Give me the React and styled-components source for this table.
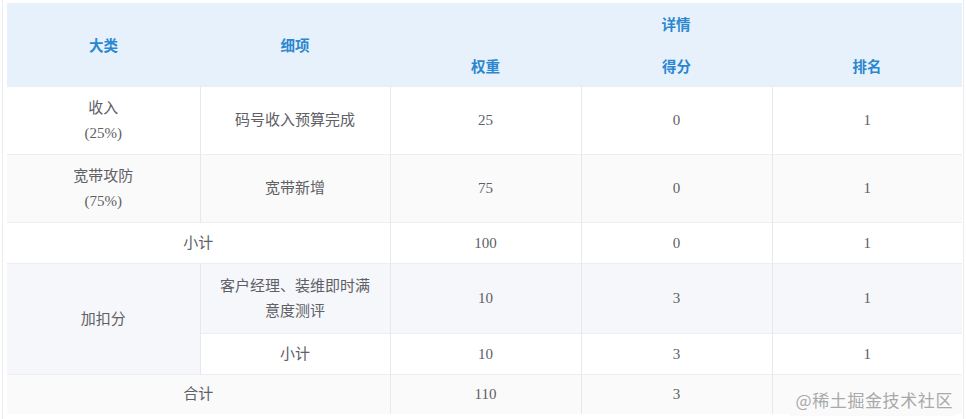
import React from 'react';
import styled, { createGlobalStyle } from 'styled-components';

const GlobalStyle = createGlobalStyle`
  body {
    margin: 0;
    background: #ffffff;
    font-family: "Liberation Serif", "Noto Sans CJK SC", serif;
  }
`;

const Frame = styled.div`
  position: relative;
  margin: 0 2px;
  padding: 3px 3px 0 4px;
  border-left: 1px solid #ececec;
  border-right: 1px solid #ececec;
  height: 416px;
`;

const Table = styled.table`
  width: 955px;
  table-layout: fixed;
  border-collapse: collapse;
  font-size: 15px;
  color: #5e6066;
`;

const HeadCell = styled.th`
  background: #e6f1fb;
  color: #2b87cf;
  font-family: "Noto Sans CJK SC", sans-serif;
  font-weight: 700;
  font-size: 14.5px;
  height: ${p => p.h || 41}px;
  padding: 0;
  text-align: center;
  vertical-align: middle;
  border: none;
`;

const Row = styled.tr`
  background: ${p => p.bg || '#ffffff'};
`;

const Cell = styled.td`
  height: ${p => p.h}px;
  padding: 0 8px;
  text-align: center;
  vertical-align: middle;
  line-height: 25px;
  border-top: 1px solid #ebeef5;
  border-right: 1px solid #e6e8eb;
  background: ${p => p.bg || 'transparent'};
  &:last-child {
    border-right: none;
  }
`;

const Watermark = styled.div`
  position: absolute;
  right: 8px;
  bottom: 3px;
  padding: 4px 2px 5px 6px;
  background: #fafafa;
  font-family: "Noto Sans CJK SC", sans-serif;
  font-size: 17px;
  line-height: 22px;
  color: #a9a9a9;
  letter-spacing: 0.6px;
`;

const App = () => {
  return (
    <>
      <GlobalStyle />
      <Frame>
        <Table>
          <colgroup>
            <col style={{ width: 193 }} />
            <col style={{ width: 190 }} />
            <col style={{ width: 191 }} />
            <col style={{ width: 191 }} />
            <col style={{ width: 190 }} />
          </colgroup>
          <thead>
            <tr>
              <HeadCell rowSpan={2} h={83}>大类</HeadCell>
              <HeadCell rowSpan={2} h={83}>细项</HeadCell>
              <HeadCell colSpan={3} h={41}>详情</HeadCell>
            </tr>
            <tr>
              <HeadCell h={42}>权重</HeadCell>
              <HeadCell h={42}>得分</HeadCell>
              <HeadCell h={42}>排名</HeadCell>
            </tr>
          </thead>
          <tbody>
            <Row>
              <Cell h={67}>收入<br />(25%)</Cell>
              <Cell h={67}>码号收入预算完成</Cell>
              <Cell h={67}>25</Cell>
              <Cell h={67}>0</Cell>
              <Cell h={67}>1</Cell>
            </Row>
            <Row bg="#fafafa">
              <Cell h={67}>宽带攻防<br />(75%)</Cell>
              <Cell h={67}>宽带新增</Cell>
              <Cell h={67}>75</Cell>
              <Cell h={67}>0</Cell>
              <Cell h={67}>1</Cell>
            </Row>
            <Row>
              <Cell h={40} colSpan={2}>小计</Cell>
              <Cell h={40}>100</Cell>
              <Cell h={40}>0</Cell>
              <Cell h={40}>1</Cell>
            </Row>
            <Row bg="#f5f7fa">
              <Cell h={69} rowSpan={2} bg="#f5f7fa">加扣分</Cell>
              <Cell h={69}>客户经理、装维即时满<br />意度测评</Cell>
              <Cell h={69}>10</Cell>
              <Cell h={69}>3</Cell>
              <Cell h={69}>1</Cell>
            </Row>
            <Row>
              <Cell h={40}>小计</Cell>
              <Cell h={40}>10</Cell>
              <Cell h={40}>3</Cell>
              <Cell h={40}>1</Cell>
            </Row>
            <Row bg="#fafafa">
              <Cell h={39} colSpan={2}>合计</Cell>
              <Cell h={39}>110</Cell>
              <Cell h={39}>3</Cell>
              <Cell h={39}>1</Cell>
            </Row>
          </tbody>
        </Table>
        <Watermark>@稀土掘金技术社区</Watermark>
      </Frame>
    </>
  );
};

export default App;
